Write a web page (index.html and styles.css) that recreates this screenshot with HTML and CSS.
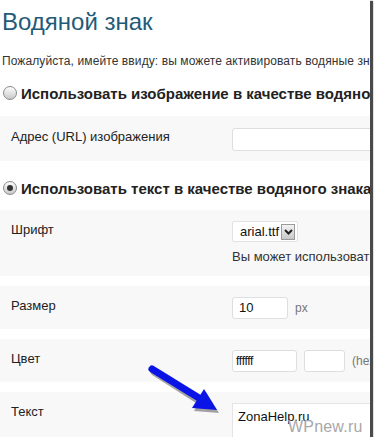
FILE: index.html
```html
<!DOCTYPE html>
<html lang="ru">
<head>
<meta charset="utf-8">
<title>Водяной знак</title>
<link rel="stylesheet" href="styles.css">
</head>
<body>
<div class="frame">
    <h2 class="title">Водяной знак</h2>
    <p class="note">Пожалуйста, имейте ввиду: вы можете активировать водяные знаки</p>

    <div class="choice"><span class="radio"></span>Использовать изображение в качестве водяного знака</div>
    <div class="row row-url">
        <div class="label">Адрес (URL) изображения</div>
        <div class="field"><span class="input input-wide"></span></div>
    </div>

    <div class="choice choice-text"><span class="radio checked"></span>Использовать текст в качестве водяного знака</div>
    <div class="row">
        <div class="label">Шрифт</div>
        <div class="field">
            <div class="select">
                <span class="select-value">arial.ttf</span>
                <span class="select-btn">
                    <svg width="9" height="6" viewBox="0 0 9 6"><path d="M1 1 L4.5 4.5 L8 1" fill="none" stroke="#222" stroke-width="2"/></svg>
                </span>
            </div>
            <div class="hint">Вы может использовать свои шрифты</div>
        </div>
    </div>
    <div class="row">
        <div class="label">Размер</div>
        <div class="field"><span class="input input-size">10</span><span class="unit">px</span></div>
    </div>
    <div class="row">
        <div class="label">Цвет</div>
        <div class="field"><span class="input input-hex">ffffff</span><span class="input input-swatch"></span><span class="unit">(hex)</span></div>
    </div>
    <div class="row">
        <div class="label">Текст</div>
        <div class="field"><span class="input textarea">ZonaHelp.ru</span></div>
    </div>

    <svg class="arrow" width="80" height="50" viewBox="0 0 80 50">
        <g transform="translate(1 2)">
            <path d="M3 4 L50 34" stroke="rgba(0,0,0,.35)" stroke-width="7" stroke-linecap="round" transform="translate(2 2)"/>
            <path d="M55 24 L43 43 L68 45 Z" fill="rgba(0,0,0,.35)" transform="translate(2 2)"/>
        </g>
        <path d="M4 5 L51 34" stroke="#0a14e6" stroke-width="7" stroke-linecap="round"/>
        <path d="M56 25 L44 44 L69 46 Z" fill="#0a14e6"/>
    </svg>
    <div class="stamp">WPnew.ru</div>
</div>
</body>
</html>
```

FILE: styles.css
```css
* {
    margin: 0;
    padding: 0;
    box-sizing: border-box;
}
body {
    background: #fff;
    font-family: "Liberation Sans", Arial, sans-serif;
    color: #222;
}
.frame {
    position: relative;
    width: 370px;
    height: 437px;
    overflow: hidden;
    background: #fff;
    box-shadow: 2px 2px 1px 1px #4a4a4a;
}
.title {
    height: 44px;
    line-height: 44px;
    padding-left: 2px;
    font-size: 24px;
    font-weight: normal;
    color: #1f5b78;
    white-space: nowrap;
}
.note {
    height: 34px;
    line-height: 34px;
    padding-left: 2px;
    font-size: 12px;
    letter-spacing: 0.1px;
    color: #333;
    white-space: nowrap;
}
.choice {
    display: flex;
    align-items: center;
    gap: 4px;
    height: 30px;
    padding-left: 3px;
    margin-bottom: 8px;
    font-size: 15px;
    font-weight: bold;
    color: #222;
    white-space: nowrap;
}
.choice-text {
    margin-top: 12px;
    margin-bottom: 7px;
}
.radio {
    flex: none;
    position: relative;
    width: 14px;
    height: 14px;
    border: 1px solid #8a8a8a;
    border-radius: 50%;
    background: linear-gradient(#fdfdfd, #c9c9c9);
}
.radio.checked::after {
    content: "";
    position: absolute;
    left: 3px;
    top: 3px;
    width: 6px;
    height: 6px;
    border-radius: 50%;
    background: #333;
}
/* form rows */
.row {
    display: flex;
    background: #f8f8f8;
    padding: 11px 0 10px 11px;
    margin-bottom: 10px;
    font-size: 13px;
}
.row-url {
    padding-top: 12px;
}
.label {
    flex: none;
    width: 221px;
    line-height: 18px;
    color: #222;
}
.field {
    flex: 1;
    min-width: 0;
    white-space: nowrap;
}
.field .unit {
    margin-left: 7px;
    font-size: 12px;
    line-height: 22px;
    color: #777;
    vertical-align: top;
}
.input {
    display: inline-block;
    height: 22px;
    line-height: 20px;
    border: 1px solid #dedede;
    border-radius: 3px;
    background: #fff;
    vertical-align: top;
    font-size: 13px;
    color: #111;
}
.input-wide {
    width: 160px;
    height: 23px;
}
.input-size {
    width: 56px;
    padding-left: 6px;
}
.input-hex {
    width: 65px;
    padding-left: 3px;
    font-size: 12px;
    letter-spacing: -0.3px;
}
.input-swatch {
    width: 41px;
    margin-left: 7px;
}
.textarea {
    width: 160px;
    height: 60px;
    padding: 3px 0 0 5px;
    border-radius: 0;
    border-color: #e4e4e4;
}
.select {
    display: flex;
    align-items: center;
    width: 66px;
    height: 21px;
    border: 1px solid #e2e2e2;
    border-radius: 2px;
    background: #fff;
    padding-left: 7px;
}
.select-value {
    flex: 1;
    font-size: 13px;
    color: #111;
}
.select-btn {
    display: flex;
    align-items: center;
    justify-content: center;
    width: 14px;
    height: 16px;
    margin-right: 2px;
    border: 1px solid #9a9a9a;
    background: linear-gradient(#f2f2f2, #c8c8c8);
}
.hint {
    margin-top: 5px;
    line-height: 19px;
    color: #333;
}
/* overlays on the screenshot */
.arrow {
    position: absolute;
    left: 148px;
    top: 364px;
}
.stamp {
    position: absolute;
    left: 288px;
    top: 418px;
    font-size: 16px;
    color: #a8a8a8;
    letter-spacing: 0.2px;
}
```
